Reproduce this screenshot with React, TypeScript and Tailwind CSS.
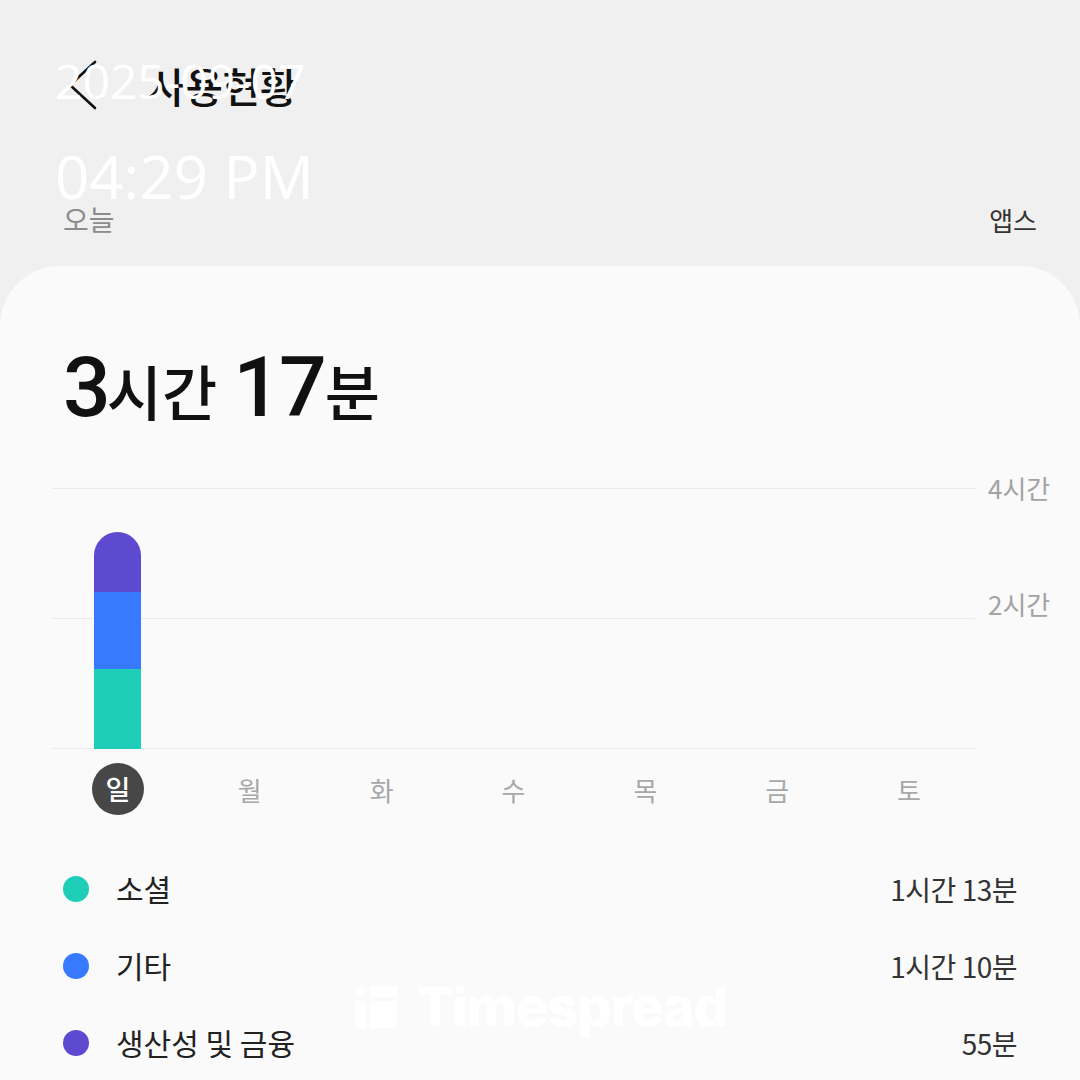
const kr = "font-['Noto_Sans_CJK_KR','Noto_Sans',sans-serif]"

const days = ["일", "월", "화", "수", "목", "금", "토"]

const categories = [
  { name: "소셜", time: "1시간 13분", color: "bg-[#1fceb6]" },
  { name: "기타", time: "1시간 10분", color: "bg-[#377aff]" },
  { name: "생산성 및 금융", time: "55분", color: "bg-[#5e49d1]" },
]

export default function App() {
  return (
    <div className={`relative w-[1080px] h-[1080px] overflow-hidden bg-[#f0f0f0] ${kr}`}>
      {/* header */}
      <div className="flex items-center h-[50px] mt-[60px] pl-[66px]">
        <svg width="32" height="50" viewBox="0 0 32 50" className="text-[#111]">
          <path d="M29 2 L4 25 L29 48" fill="none" stroke="currentColor" strokeWidth="2.6" strokeLinecap="round" strokeLinejoin="round" />
        </svg>
        <span className="ml-[50px] text-[41px] leading-none font-medium text-[#111] tracking-[-0.5px]">
          사용현황
        </span>
      </div>

      <div className="flex items-center justify-between mt-[94px] px-[63px] pr-[43px] h-[30px]">
        <span className="text-[28px] text-[#8c8c8c]">오늘</span>
        <span className="text-[26px] text-[#333]">앱스</span>
      </div>

      {/* card */}
      <div className="mt-[32px] h-[900px] rounded-t-[60px] bg-[#fafafa]">
        <div className="flex items-baseline pt-[80px] pl-[63px] text-[#111] leading-none">
          <span className="text-[84px] font-medium tracking-[-4px] font-['Roboto',sans-serif]">3</span>
          <span className="text-[60px] font-medium">시간</span>
          <span className="ml-[16px] text-[84px] font-medium tracking-[-2px] font-['Roboto',sans-serif]">17</span>
          <span className="text-[60px] font-medium">분</span>
        </div>

        {/* chart */}
        <div className="flex mt-[58px] pl-[52px]">
          <div className="relative w-[923px] h-[261px]">
            <div className="flex flex-col justify-between h-full">
              <div className="h-px bg-[#ebebeb]" />
              <div className="h-px bg-[#ebebeb]" />
              <div className="h-px bg-[#ebebeb]" />
            </div>
            <div className="absolute inset-0 grid grid-cols-7 items-end">
              <div className="flex justify-center">
                <div className="flex flex-col w-[47px] overflow-hidden rounded-t-full">
                  <div className="h-[60px] bg-[#5e49d1]" />
                  <div className="h-[77px] bg-[#377aff]" />
                  <div className="h-[80px] bg-[#1fceb6]" />
                </div>
              </div>
            </div>
          </div>
          <div className="flex flex-col justify-between h-[261px] -my-[15px] ml-[13px] text-[26px] leading-[30px] text-[#a3a3a3]">
            <span>4시간</span>
            <span>2시간</span>
            <span className="invisible">0</span>
          </div>
        </div>

        <div className="grid grid-cols-7 w-[923px] ml-[52px] mt-[14px]">
          {days.map((d, i) => (
            <div key={d} className="flex justify-center">
              {i === 0 ? (
                <div className="flex items-center justify-center w-[52px] h-[52px] rounded-full bg-[#474747] text-[27px] font-medium text-white">
                  {d}
                </div>
              ) : (
                <div className="flex items-center justify-center h-[52px] text-[26px] text-[#a8a8a8]">{d}</div>
              )}
            </div>
          ))}
        </div>

        {/* legend */}
        <div className="flex flex-col mt-[35px] pl-[63px] pr-[63px]">
          {categories.map((c) => (
            <div key={c.name} className="flex items-center h-[77px]">
              <div className={`w-[26px] h-[26px] rounded-full ${c.color}`} />
              <span className="ml-[27px] text-[30px] text-[#222]">{c.name}</span>
              <span className="ml-auto text-[28px] tracking-[-0.5px] text-[#333]">{c.time}</span>
            </div>
          ))}
        </div>
      </div>

      {/* watermark */}
      <div className="absolute left-[355px] top-[980px] flex items-center gap-[20px] text-white">
        <div className="flex gap-[4px] items-end h-[42px]">
          <div className="flex flex-col gap-[4px] w-[11px]">
            <div className="h-[11px] rounded-full bg-white" />
            <div className="h-[27px] bg-white" />
          </div>
          <div className="flex flex-col gap-[4px] w-[27px]">
            <div className="h-[11px] bg-white" />
            <div className="h-[27px] bg-white" />
          </div>
        </div>
        <span className="text-[54px] font-extrabold leading-none tracking-[-1px] font-['Inter',sans-serif]">Timespread</span>
      </div>

      {/* timestamp overlay */}
      <div className="absolute left-[55px] top-[57px] flex flex-col text-white font-['Open_Sans',sans-serif] leading-none">
        <span className="text-[48px]">2025-09-07</span>
        <span className="mt-[41px] text-[60px]">04:29 PM</span>
      </div>
    </div>
  )
}
